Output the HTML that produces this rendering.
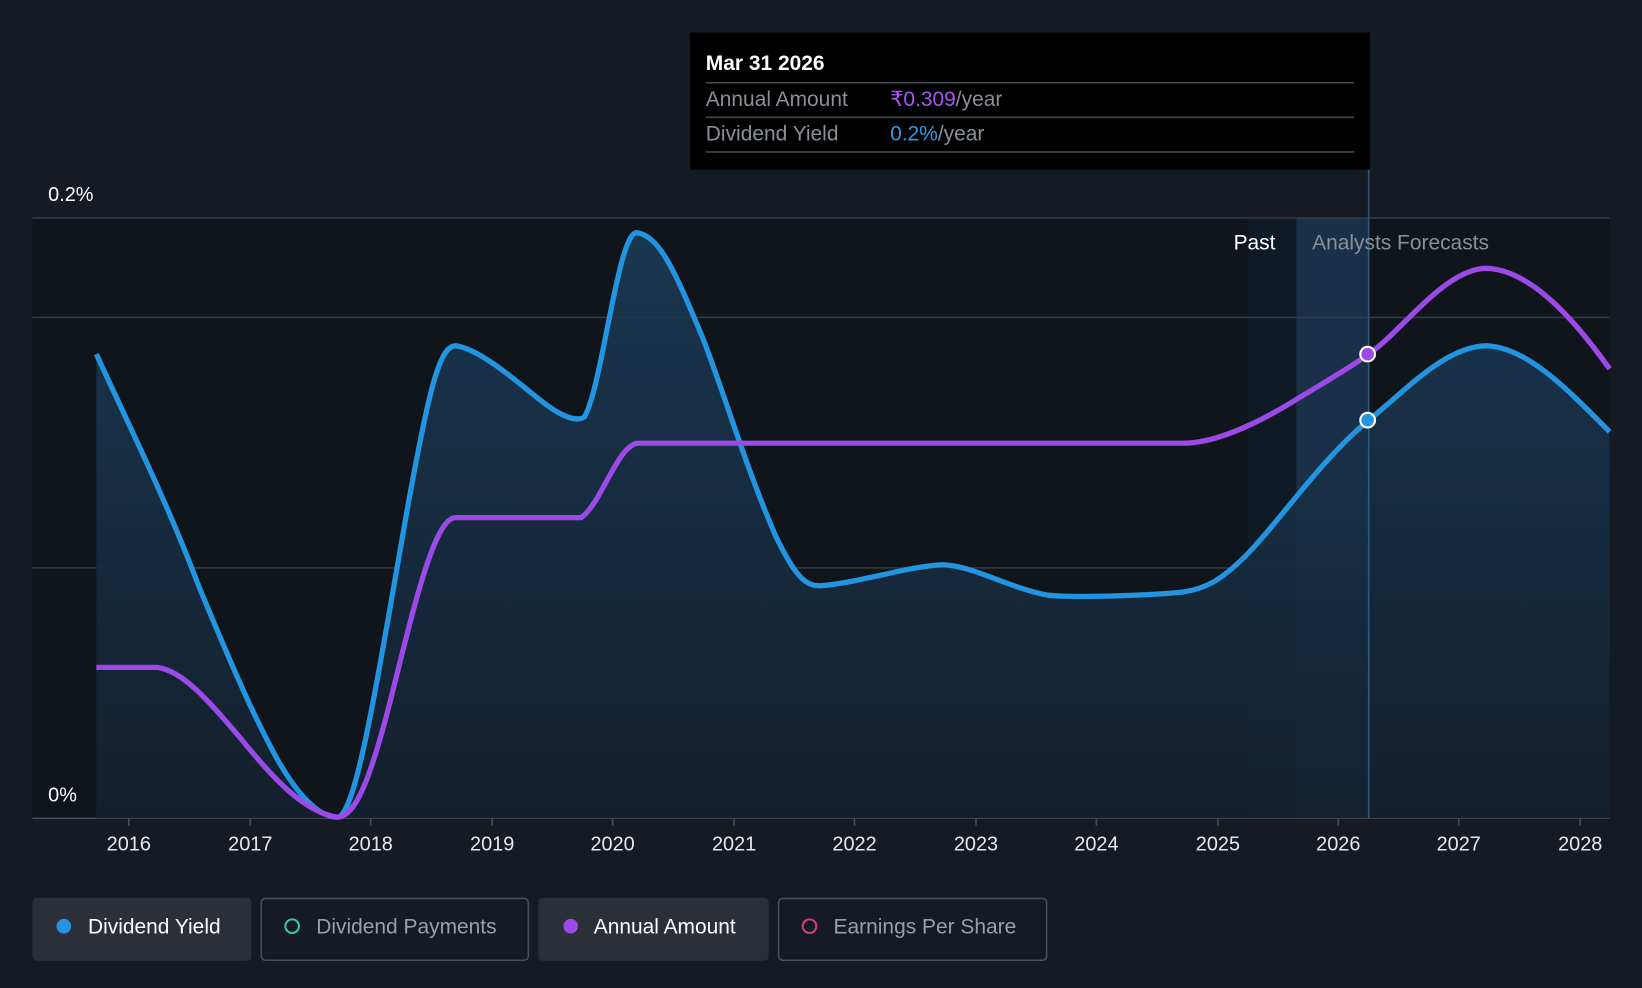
<!DOCTYPE html>
<html><head><meta charset="utf-8"><style>
html,body{margin:0;padding:0;background:#151a23;}
svg{display:block;}
text{font-family:"Liberation Sans",sans-serif;}
</style></head><body>
<svg width="1642" height="988" viewBox="0 0 1568 943" xmlns="http://www.w3.org/2000/svg" preserveAspectRatio="none">
<defs>
<linearGradient id="bf" x1="0" y1="0" x2="0" y2="1">
<stop offset="0" stop-color="#1b3a56"/><stop offset="1" stop-color="#13202e"/></linearGradient>
</defs>
<rect width="1568" height="943" fill="#151a23"/>
<rect x="31" y="208" width="1506" height="573" fill="#10141b"/>
<rect x="1191" y="208" width="47" height="573" fill="#0f1a25"/>
<rect x="1238" y="208" width="69" height="573" fill="#1a3048"/>
<g stroke="#353b45" stroke-width="1.5">
<line x1="31" y1="208" x2="1537" y2="208"/>
<line x1="31" y1="303" x2="1537" y2="303"/>
<line x1="31" y1="542" x2="1537" y2="542"/>
<line x1="31" y1="781" x2="1537" y2="781" stroke="#4a505a"/>
</g>
<path id="blue" d="M92,338 C125,410 160,480 190,560 C215,620 240,680 265,725 C285,760 305,780 322,780 C340,780 360,650 390,480 C410,370 420,330 435,330 C460,333 500,370 520,385 C540,400 552,402 558,398 C575,370 590,222 608,222 C630,225 645,260 670,320 C690,370 710,440 740,510 C760,552 770,560 785,559 C820,556 870,540 900,539 C930,540 960,560 1000,568 C1030,571 1100,568 1130,565 C1150,562 1165,555 1190,530 C1220,500 1260,440 1307,401 C1340,375 1380,330 1420,330 C1460,332 1500,375 1537,412 L1537,781 L92,781 Z" fill="url(#bf)" opacity="0.9"/>
<path d="M92,338 C125,410 160,480 190,560 C215,620 240,680 265,725 C285,760 305,780 322,780 C340,780 360,650 390,480 C410,370 420,330 435,330 C460,333 500,370 520,385 C540,400 552,402 558,398 C575,370 590,222 608,222 C630,225 645,260 670,320 C690,370 710,440 740,510 C760,552 770,560 785,559 C820,556 870,540 900,539 C930,540 960,560 1000,568 C1030,571 1100,568 1130,565 C1150,562 1165,555 1190,530 C1220,500 1260,440 1307,401 C1340,375 1380,330 1420,330 C1460,332 1500,375 1537,412" fill="none" stroke="#2394e0" stroke-width="5"/>
<path d="M92,637 L150,637 C175,640 200,670 230,705 C260,742 290,775 322,780 C340,780 355,740 375,660 C395,580 415,494 435,494 L555,494 C575,480 590,423 610,423 L1130,423 C1160,423 1200,405 1240,380 C1270,362 1290,350 1307,338 C1340,315 1380,256 1420,256 C1460,258 1500,300 1537,352" fill="none" stroke="#9b4ae8" stroke-width="5"/>
<line x1="1307" y1="160" x2="1307" y2="781" stroke="#2b5a80" stroke-width="1.5"/>
<circle cx="1306" cy="338" r="7" fill="#9b4ae8" stroke="#fff" stroke-width="2"/>
<circle cx="1306" cy="401" r="7" fill="#2394e0" stroke="#fff" stroke-width="2"/>
<g font-size="19" fill="#fff">
<text x="46" y="192">0.2%</text><text x="46" y="765">0%</text>
</g>
<g font-size="19" fill="#e6e8eb" text-anchor="middle">
<text x="123" y="812">2016</text><text x="239" y="812">2017</text><text x="354" y="812">2018</text><text x="470" y="812">2019</text><text x="585" y="812">2020</text><text x="701" y="812">2021</text><text x="816" y="812">2022</text><text x="932" y="812">2023</text><text x="1047" y="812">2024</text><text x="1163" y="812">2025</text><text x="1278" y="812">2026</text><text x="1393" y="812">2027</text><text x="1509" y="812">2028</text>
</g>
<g stroke="#4a505a" stroke-width="1.5">
<line x1="123" y1="781" x2="123" y2="788"/><line x1="239" y1="781" x2="239" y2="788"/><line x1="354" y1="781" x2="354" y2="788"/><line x1="470" y1="781" x2="470" y2="788"/><line x1="585" y1="781" x2="585" y2="788"/><line x1="701" y1="781" x2="701" y2="788"/><line x1="816" y1="781" x2="816" y2="788"/><line x1="932" y1="781" x2="932" y2="788"/><line x1="1047" y1="781" x2="1047" y2="788"/><line x1="1163" y1="781" x2="1163" y2="788"/><line x1="1278" y1="781" x2="1278" y2="788"/><line x1="1393" y1="781" x2="1393" y2="788"/><line x1="1509" y1="781" x2="1509" y2="788"/>
</g>
<text x="1178" y="238" font-size="20" fill="#fff">Past</text>
<text x="1253" y="238" font-size="20" fill="#8a8f98">Analysts Forecasts</text>
<rect x="659" y="31" width="649" height="131" fill="#000"/>
<text x="674" y="67" font-size="20" font-weight="bold" fill="#fff">Mar 31 2026</text>
<g stroke="#444950" stroke-width="1.5"><line x1="674" y1="79" x2="1293" y2="79"/><line x1="674" y1="112" x2="1293" y2="112"/><line x1="674" y1="145" x2="1293" y2="145"/></g>
<text x="674" y="101" font-size="20" fill="#8a8f98">Annual Amount</text>
<text x="850" y="101" font-size="20" fill="#a855f7">₹0.309<tspan fill="#8a8f98">/year</tspan></text>
<text x="674" y="134" font-size="20" fill="#8a8f98">Dividend Yield</text>
<text x="850" y="134" font-size="20" fill="#2d9be6">0.2%<tspan fill="#8a8f98">/year</tspan></text>
<rect x="31" y="857" width="209" height="60" rx="4" fill="#2a2f38"/>
<circle cx="61" cy="884" r="7" fill="#2394e0"/>
<text x="84" y="891" font-size="20" fill="#fff">Dividend Yield</text>
<rect x="249.5" y="857.5" width="255" height="59" rx="4" fill="none" stroke="#4a4f58" stroke-width="1.5"/>
<circle cx="279" cy="884" r="6.5" fill="none" stroke="#3fc1b0" stroke-width="2"/>
<text x="302" y="891" font-size="20" fill="#9aa0a8">Dividend Payments</text>
<rect x="514" y="857" width="220" height="60" rx="4" fill="#2a2f38"/>
<circle cx="545" cy="884" r="7" fill="#9b4ae8"/>
<text x="567" y="891" font-size="20" fill="#fff">Annual Amount</text>
<rect x="743.5" y="857.5" width="256" height="59" rx="4" fill="none" stroke="#4a4f58" stroke-width="1.5"/>
<circle cx="773" cy="884" r="6.5" fill="none" stroke="#d0407a" stroke-width="2"/>
<text x="796" y="891" font-size="20" fill="#9aa0a8">Earnings Per Share</text>
</svg>
</body></html>
